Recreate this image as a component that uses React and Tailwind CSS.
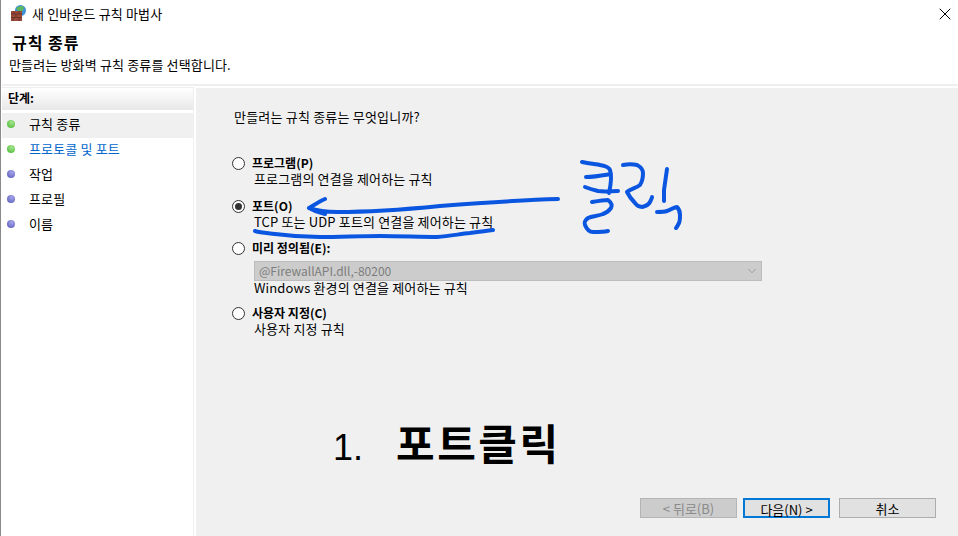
import React from "react";
import { ChevronDown, X } from "lucide-react";

const font = { fontFamily: '"Noto Sans CJK KR", "Liberation Sans", sans-serif' };

function FirewallIcon() {
  return (
    <svg width="18" height="18" viewBox="0 0 18 18" className="shrink-0">
      <circle cx="10.500" cy="5.500" r="5.500" fill="#3f8fd8" />
      <path d="M6 3 Q9 0.500 13 1 Q15 4 12 6 Q8 7 6 3Z" fill="#5cb85c" />
      <rect x="1" y="6" width="11" height="10" fill="#9a4a3a" />
      <path d="M1 9h11M1 12.500h11M4 6v3M9 6v3M6 9v3.500M3 12.500V16M9 12.500V16" stroke="#6d3327" strokeWidth="1" fill="none" />
    </svg>
  );
}

function StepRow({ label, done, active, link }) {
  return (
    <div className={`flex h-[25px] items-center pb-[3px] pl-[5px] ${active ? "bg-[#f0f0f0]" : ""}`}>
      <span
        className={`h-2 w-2 shrink-0 rounded-full ${
          done
            ? "bg-[radial-gradient(circle_at_60%_30%,#a5e58f,#45b52f)]"
            : "bg-[radial-gradient(circle_at_60%_30%,#a5a5ea,#5454b8)]"
        }`}
      />
      <span className={`ml-[14px] text-[13px] tracking-[0.15px] ${link ? "text-[#0066cc]" : "text-black"}`}>{label}</span>
    </div>
  );
}

function RadioOption({ label, hotkey, checked, desc, children, className }) {
  return (
    <div className={className}>
      <div className="flex h-4 items-center">
        <span className="flex h-[13px] w-[13px] shrink-0 items-center justify-center rounded-full border border-[#333] bg-white">
          {checked && <span className="h-[7px] w-[7px] rounded-full bg-[#333]" />}
        </span>
        <span className="ml-[7px] text-[12px] font-bold text-black">
          {label}({hotkey}){hotkey === "E" ? ":" : ""}
        </span>
      </div>
      {children}
      <div className="ml-[22px] h-4 text-[13px] leading-4 tracking-[0.15px] text-black">{desc}</div>
    </div>
  );
}

export default function App() {
  return (
    <div className="relative h-[536px] w-[958px] overflow-hidden border-l border-[#8a8a8a] bg-white pl-[1px]" style={font}>
      {/* Title bar */}
      <div className="flex h-[30px] items-center pb-[2px] pl-[8px]">
        <FirewallIcon />
        <span className="ml-[4px] text-[13px] tracking-[0.15px] text-black">새 인바운드 규칙 마법사</span>
        <X size={20} strokeWidth={1.2} className="ml-auto mr-[3px] text-black" />
      </div>

      {/* Header */}
      <div className="h-[56px] border-b-2 border-[#efefef] pl-[7px] pt-[2px]">
        <h1 className="pl-[3px] text-[16px] leading-5 font-bold tracking-[1px] text-black">규칙 종류</h1>
        <p className="mt-[5px] text-[13px] leading-4 tracking-[0.15px] text-black">만들려는 방화벽 규칙 종류를 선택합니다.</p>
      </div>

      <div className="mt-[1px] flex h-[449px]">
        {/* Steps */}
        <div className="w-[192px] shrink-0 border-t border-r border-[#efefef]">
          <div className="flex h-[22px] items-center bg-gradient-to-b from-white to-[#e8e8e8] pb-[2px] pl-[6px] text-[12px] font-bold text-black">
            단계:
          </div>
          <div className="mt-[3px]">
            <StepRow label="규칙 종류" done active />
            <StepRow label="프로토콜 및 포트" done link />
            <StepRow label="작업" />
            <StepRow label="프로필" />
            <StepRow label="이름" />
          </div>
        </div>

        {/* Main panel */}
        <div className="ml-[2px] mt-[1px] flex flex-1 flex-col bg-[#f0f0f0] pl-[36px] pt-[21px]">
          <p className="ml-[2px] h-4 text-[13px] leading-4 tracking-[0.2px] text-black">만들려는 규칙 종류는 무엇입니까?</p>

          <RadioOption className="mt-[30px]" label="프로그램" hotkey="P" desc="프로그램의 연결을 제어하는 규칙" />
          <RadioOption className="mt-[11px]" label="포트" hotkey="O" checked desc="TCP 또는 UDP 포트의 연결을 제어하는 규칙" />
          <RadioOption className="mt-[10px]" label="미리 정의됨" hotkey="E" desc="Windows 환경의 연결을 제어하는 규칙">
            <div className="ml-[22px] mt-[5px] -mb-px flex h-5 w-[508px] items-center justify-between border border-[#bcbcbc] bg-[#cccccc] pl-[4px] pr-[2px] text-[12px] text-[#7d7d7d]">
              <span>@FirewallAPI.dll,-80200</span>
              <ChevronDown size={14} strokeWidth={1} />
            </div>
          </RadioOption>
          <RadioOption className="mt-[9px]" label="사용자 지정" hotkey="C" desc="사용자 지정 규칙" />

          {/* Buttons */}
          <div className="mt-auto mb-[18px] flex text-[13px]">
            <button className="ml-[408px] h-5 w-[97px] border border-[#b5b5b5] bg-[#cccccc] text-[#8a8a8a]">&lt; 뒤로(B)</button>
            <button className="ml-[6px] h-5 w-[87px] border-2 border-[#0078d7] bg-[#e1e1e1] text-black">다음(N) &gt;</button>
            <button className="ml-[9px] h-5 w-[97px] border border-[#adadad] bg-[#e1e1e1] text-black">취소</button>
          </div>
        </div>
      </div>

      {/* Hand-written annotations */}
      <svg width="958" height="536" className="pointer-events-none absolute top-0 left-[-1px]" fill="none" stroke="#0b56e0" strokeWidth="4" strokeLinecap="round" strokeLinejoin="round">
        <path d="M558 199 C520 200 480 203 440 206 C400 210 360 212 337 212 C325 212 315 210 309 208 M309 208 C314 205 320 201 325 199 M309 208 C314 211 320 213 325 214" />
        <path d="M255 231 C262 233 268 233 275 234 C290 236 305 237 320 237 C340 237 360 236 380 236 C400 236 420 237 437 237 C450 236 460 234 470 233 C478 232 486 231 493 230" />
        <path d="M582 162 C590 164 597 164 600 165 C606 166 609 167 610 170 C612 176 611 184 609 193 M586 177 C595 177 605 175 611 174 M585 187 C590 189 594 190 598 191 C605 192 612 191 618 191 M592 202 C598 201 604 200 608 200 C612 203 612 206 611 208 C608 212 606 213 603 214 C598 216 592 216 588 218 C585 220 584 223 585 225 C587 230 590 232 593 232 C598 232 604 232 608 231" />
        <path d="M623 165 C628 164 633 164 637 165 C641 167 643 170 643 173 C643 178 642 182 640 185 C636 188 630 189 627 192 C629 196 632 200 635 203 C637 206 640 207 642 207 C646 206 649 204 650 202 C651 200 652 198 652 197" />
        <path d="M667 169 C666 176 665 183 664 190 C664 194 664 198 664 201 M657 212 C661 212 664 212 667 211 C671 210 674 207 677 207 C679 209 680 212 680 215 C680 218 680 221 679 223 C678 225 677 227 676 228" />
      </svg>

      <div className="absolute top-[414px] left-[332px] flex items-baseline text-[42px] leading-[56px] text-black">
        <span className="w-[63px] text-[36px]" style={{ fontFamily: '"Liberation Sans", sans-serif' }}>1.</span>
        <span className="font-bold tracking-[2.500px]">포트클릭</span>
      </div>
    </div>
  );
}
